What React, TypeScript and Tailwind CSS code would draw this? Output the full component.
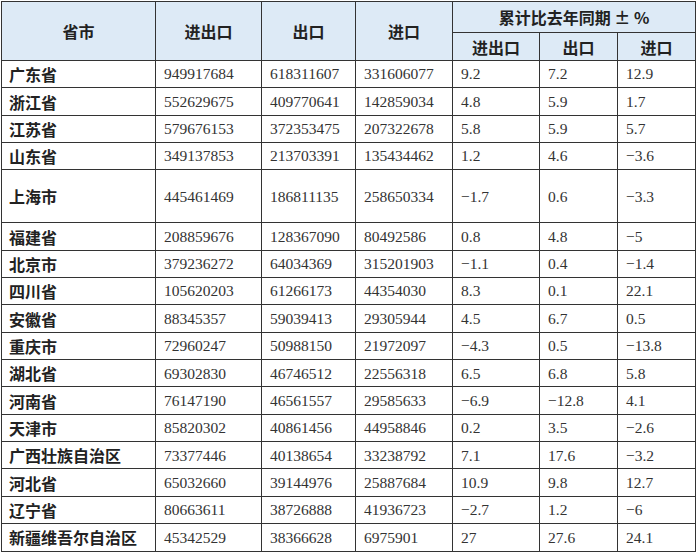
const rows: [string, string, string, string, string, string, string, boolean?][] = [
  ["广东省", "949917684", "618311607", "331606077", "9.2", "7.2", "12.9"],
  ["浙江省", "552629675", "409770641", "142859034", "4.8", "5.9", "1.7"],
  ["江苏省", "579676153", "372353475", "207322678", "5.8", "5.9", "5.7"],
  ["山东省", "349137853", "213703391", "135434462", "1.2", "4.6", "−3.6"],
  ["上海市", "445461469", "186811135", "258650334", "−1.7", "0.6", "−3.3", true],
  ["福建省", "208859676", "128367090", "80492586", "0.8", "4.8", "−5"],
  ["北京市", "379236272", "64034369", "315201903", "−1.1", "0.4", "−1.4"],
  ["四川省", "105620203", "61266173", "44354030", "8.3", "0.1", "22.1"],
  ["安徽省", "88345357", "59039413", "29305944", "4.5", "6.7", "0.5"],
  ["重庆市", "72960247", "50988150", "21972097", "−4.3", "0.5", "−13.8"],
  ["湖北省", "69302830", "46746512", "22556318", "6.5", "6.8", "5.8"],
  ["河南省", "76147190", "46561557", "29585633", "−6.9", "−12.8", "4.1"],
  ["天津市", "85820302", "40861456", "44958846", "0.2", "3.5", "−2.6"],
  ["广西壮族自治区", "73377446", "40138654", "33238792", "7.1", "17.6", "−3.2"],
  ["河北省", "65032660", "39144976", "25887684", "10.9", "9.8", "12.7"],
  ["辽宁省", "80663611", "38726888", "41936723", "−2.7", "1.2", "−6"],
  ["新疆维吾尔自治区", "45342529", "38366628", "6975901", "27", "27.6", "24.1"],
];

const cjk = "font-['Noto_Sans_CJK_SC',sans-serif]";
const num = "font-['Liberation_Serif','Noto_Sans_CJK_SC',serif]";

export default function App() {
  return (
    <div className="w-[700px] h-[553px] bg-white pl-[1px] pt-[1px] overflow-hidden">
      <table className="table-fixed border-collapse text-[#222] w-[694px]">
        <colgroup>
          <col className="w-[154px]" />
          <col className="w-[106px]" />
          <col className="w-[94px]" />
          <col className="w-[97px]" />
          <col className="w-[87px]" />
          <col className="w-[78px]" />
          <col className="w-[78px]" />
        </colgroup>
        <thead>
          <tr className={`h-[31px] bg-[#ddeaf6] ${cjk} font-bold text-[16px]`}>
            <th rowSpan={2} className="border border-[#333] text-center">省市</th>
            <th rowSpan={2} className="border border-[#333] text-center">进出口</th>
            <th rowSpan={2} className="border border-[#333] text-center">出口</th>
            <th rowSpan={2} className="border border-[#333] text-center">进口</th>
            <th colSpan={3} className="border border-[#333] text-center">
              累计比去年同期 ± %
            </th>
          </tr>
          <tr className={`h-[28px] bg-[#ddeaf6] ${cjk} font-bold text-[16px]`}>
            <th className="border border-[#333] text-center">进出口</th>
            <th className="border border-[#333] text-center">出口</th>
            <th className="border border-[#333] text-center">进口</th>
          </tr>
        </thead>
        <tbody>
          {rows.map((r) => (
            <tr key={r[0]} className={r[7] ? "h-[53px]" : "h-[27.35px]"}>
              <td className={`border border-[#333] pl-[7px] ${cjk} font-bold text-[16px] leading-none`}>
                {r[0]}
              </td>
              {r.slice(1, 7).map((v, i) => (
                <td
                  key={i}
                  className={`border border-[#333] pl-[8px] ${num} text-[15.5px] leading-none text-[#333]`}
                >
                  {v}
                </td>
              ))}
            </tr>
          ))}
        </tbody>
      </table>
    </div>
  );
}
